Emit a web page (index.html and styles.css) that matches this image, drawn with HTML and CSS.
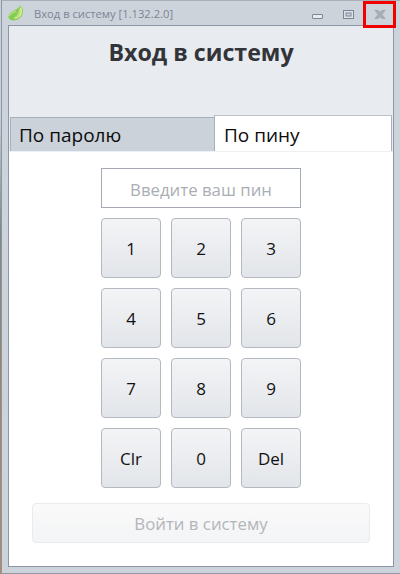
FILE: index.html
```html
<!DOCTYPE html>
<html lang="ru">
<head>
<meta charset="utf-8">
<title>Вход в систему</title>
<link rel="stylesheet" href="styles.css">
</head>
<body>
<div class="wallpaper"></div>
<div class="window">
  <header class="titlebar">
    <svg class="app-icon" width="16" height="16" viewBox="0 0 17 17">
      <path d="M13 0.4C15.6 2.6 16.8 6 15.6 9.6C14 14.2 9.4 16.8 4.6 16.4C2.8 16.2 1.2 15.2 0.6 13.6C0 11.6 1.2 9.2 3.2 7.6C6.4 5.2 10.8 4.6 13 0.4Z" fill="#84cc52"/>
      <path d="M13 1.4C15.4 4 15.8 7.4 14.4 10C12.6 13.4 8.8 15 6 14.6C9.8 11.8 12.6 7 13 1.4Z" fill="#d9ec98"/>
      <path d="M13 1.4L9 12.6M13.8 6L10 13" stroke="#9ad162" stroke-width="0.8" fill="none"/>
      <path d="M1.4 12C2.6 9.2 5.6 7.6 8.4 6.6" stroke="#b4e080" stroke-width="1.4" fill="none"/>
    </svg>
    <span class="title-text">Вход в систему [1.132.2.0]</span>
    <div class="controls">
      <svg class="ctl ctl-min" width="11" height="5" viewBox="0 0 11 5"><rect x="0.5" y="0.5" width="10" height="4" rx="0.5" fill="#e8ebf0" stroke="#7d8496"/></svg>
      <svg class="ctl ctl-max" width="11" height="9" viewBox="0 0 11 9"><rect x="0.5" y="0.5" width="10" height="8" fill="#dfe3e9" stroke="#7d8496"/><rect x="3" y="3" width="5" height="3" fill="#cdd3db" stroke="#7d8496" stroke-width="1"/></svg>
      <div class="close-box">
        <svg width="12" height="9" viewBox="0 0 12 9"><path d="M0.5 0H3.8L6 2.3L8.2 0H11.5L8 4.5L11.5 9H8.2L6 6.7L3.8 9H0.5L4 4.5Z" fill="#a9adb7" stroke="#9499a5" stroke-width="0.4"/></svg>
      </div>
    </div>
  </header>
  <main class="client">
    <h1 class="heading">Вход в систему</h1>
    <div class="tabs">
      <div class="tab tab-off">По паролю</div>
      <div class="tab tab-on">По пину</div>
    </div>
    <section class="panel">
      <div class="pin-input">Введите ваш пин</div>
      <div class="keypad">
        <button class="key">1</button>
        <button class="key">2</button>
        <button class="key">3</button>
        <button class="key">4</button>
        <button class="key">5</button>
        <button class="key">6</button>
        <button class="key">7</button>
        <button class="key">8</button>
        <button class="key">9</button>
        <button class="key">Clr</button>
        <button class="key">0</button>
        <button class="key">Del</button>
      </div>
      <button class="login" disabled>Войти в систему</button>
    </section>
  </main>
</div>
</body>
</html>
```
FILE: styles.css
```css
* { box-sizing: border-box; }
html, body { margin: 0; height: 574px; overflow: hidden; }
body {
  display: flex;
  width: 400px;
  font-family: "Open Sans", "Noto Sans", sans-serif;
  background: #cdd3db;
}
.wallpaper {
  width: 1px;
  height: 574px;
  flex: none;
  background: linear-gradient(#c8d0d8 0, #c8d0d8 20%, #7f8a80 40%, #a58560 70%, #b58a5e 100%);
}
.window {
  width: 399px;
  height: 574px;
  display: flex;
  flex-direction: column;
  background: #cdd3db;
  border-left: 1px solid #8e95a6;
  border-top: 1px solid #a9afbb;
  border-bottom: 1px solid #9298a6;
  padding: 0 6px 6px 6px;
}
.titlebar {
  height: 24px;
  flex: none;
  display: flex;
  align-items: flex-start;
  margin-right: -6px;
}
.app-icon { flex: none; margin: 4px 0 0 0; }
.title-text {
  margin: 5px 0 0 10px;
  font-size: 11.2px;
  line-height: 16px;
  color: #7d8494;
}
.controls {
  margin-left: auto;
  display: flex;
  align-items: flex-start;
}
.ctl { display: block; flex: none; }
.ctl-min { margin: 13px 0 0 0; }
.ctl-max { margin: 9px 0 0 20px; }
.close-box {
  position: relative;
  z-index: 1;
  width: 33px;
  height: 27px;
  margin: 0 4px 0 9px;
  border: 3px solid #f00000;
  display: flex;
  align-items: center;
  justify-content: center;
  flex: none;
}
.client {
  width: 386px;
  height: 542px;
  flex: none;
  background: #e8ebf0;
  border: 1px solid #8e95a6;
  display: flex;
  flex-direction: column;
}
.heading {
  margin: 0;
  height: 89px;
  flex: none;
  padding-top: 8px;
  text-align: center;
  font-size: 23.2px;
  line-height: 36px;
  font-weight: 700;
  color: #333438;
}
.tabs {
  display: flex;
  align-items: flex-end;
  height: 36px;
  flex: none;
  padding: 0 1px 0 1px;
}
.tab {
  font-size: 19px;
  color: #0c0c0c;
  padding-left: 8px;
}
.tab-off {
  width: 204px;
  height: 34px;
  background: #cbd2da;
  border-top: 1px solid #a9afbb;
  border-left: 1px solid #a9afbb;
  line-height: 34px;
}
.tab-on {
  width: 178px;
  height: 36px;
  padding-left: 9px;
  background: #fff;
  border-top: 1px solid #bcc1cb;
  border-left: 1px solid #a9afbb;
  border-right: 1px solid #a9afbb;
  line-height: 38px;
}
.panel {
  flex: 1;
  background: #fff;
  display: flex;
  flex-direction: column;
  padding-top: 16px;
  align-items: flex-start;
  border-top: 1px solid #eef0f3;
}
.pin-input {
  width: 200px;
  height: 40px;
  margin-left: 92px;
  border: 1px solid #a4a9b4;
  background: #fff;
  text-align: center;
  font-size: 16.8px;
  line-height: 42px;
  color: #aaaeb4;
}
.keypad {
  margin: 10px 0 0 92px;
  display: grid;
  grid-template-columns: repeat(3, 60px);
  grid-auto-rows: 60px;
  gap: 10px;
}
.key {
  margin: 0;
  padding: 0;
  font-family: inherit;
  font-size: 17px;
  color: #111;
  background: linear-gradient(#f3f4f6, #e2e5e9);
  border: 1px solid #b4b9c1;
  border-radius: 4px;
}
.login {
  width: 338px;
  height: 40px;
  margin: 15px 0 0 23px;
  padding: 0;
  font-family: inherit;
  font-size: 16.8px;
  color: #b3b5b9;
  background: linear-gradient(#fafafb, #f3f4f5);
  border: 1px solid #eaebed;
  border-radius: 4px;
}
```
